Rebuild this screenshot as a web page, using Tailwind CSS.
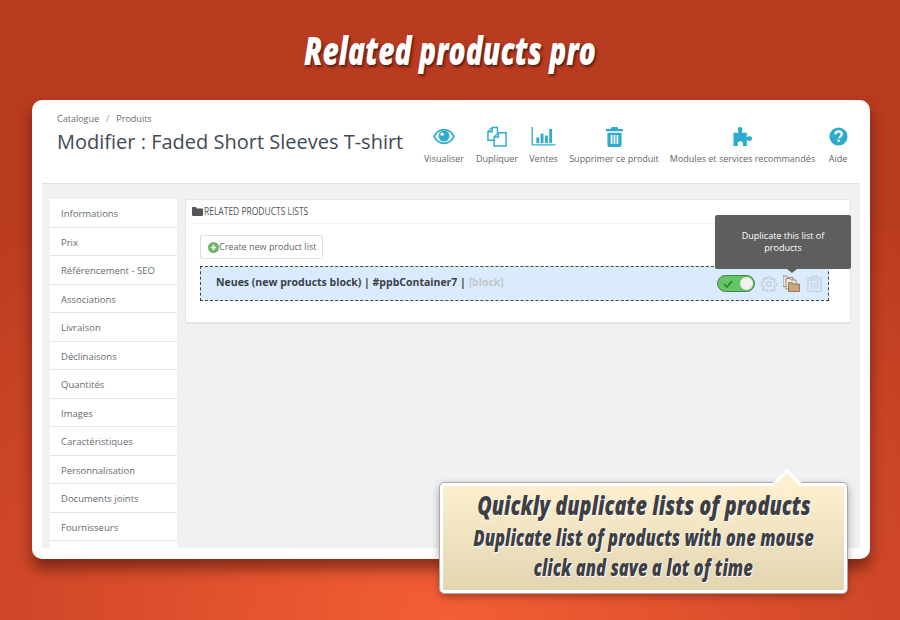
<!DOCTYPE html>
<html lang="en">
<head>
  <meta charset="UTF-8">
  <title>Related products pro</title>
  <script src="https://cdn.jsdelivr.net/npm/@tailwindcss/browser@4"></script>
</head>
<body class="w-[900px] h-[620px] overflow-hidden relative font-['Open_Sans',sans-serif] bg-[radial-gradient(ellipse_75%_85%_at_50%_100%,#f45e35_0%,#d84c2b_50%,#b93b20_100%)]">
  <h1 class="pt-[27px] h-[100px] text-center text-[38px] leading-[46px] font-extrabold italic text-white whitespace-nowrap scale-x-[.745] [text-shadow:2px_2px_3px_rgba(60,20,10,0.8)]">Related products pro</h1>

  <!-- main card -->
  <div class="mx-[32px] w-[838px] h-[459px] bg-white rounded-[10px] shadow-[0_10px_14px_rgba(60,15,5,0.55)] flex flex-col">
    <div class="h-[83px] shrink-0 flex justify-between pl-[25px] pr-[23px]">
      <div class="pt-[13px]">
        <div class="text-[9px] leading-[12px] text-[#6b6b70] flex gap-[7px]"><span>Catalogue</span><span class="text-[#999]">/</span><span>Produits</span></div>
        <div class="mt-[3px] text-[20px] leading-[28px] text-[#3f4a54] whitespace-nowrap">Modifier : Faded Short Sleeves T-shirt</div>
      </div>
      <div class="flex text-[9px] leading-[12px] text-[#666] pt-[26px] h-full">
        <div class="w-[40px] mr-[12px] flex flex-col items-center">
          <svg width="22" height="21" viewBox="0 0 24 22" fill="none"><path d="M1 11c3-5 7-7.500 11-7.500S20 6 23 11c-3 5-7 7.500-11 7.500S4 16 1 11z" stroke="#2eacce" stroke-width="1.800"/><circle cx="12" cy="10.500" r="6" fill="#2eacce"/><circle cx="10" cy="8.500" r="1.800" fill="#fff"/></svg>
          <span class="mt-[6px] whitespace-nowrap">Visualiser</span>
        </div>
        <div class="w-[42px] mr-[11px] flex flex-col items-center">
          <svg width="22" height="21" viewBox="0 0 22 22" fill="none" stroke="#2eacce" stroke-width="1.500"><path d="M8 15H1.500V6L6 1.500h5.500V7"/><path d="M6 1.500V6H1.500"/><path d="M8 11.500 12.500 7h8v14H8z" fill="#fff"/><path d="M12.500 7v4.500H8"/></svg>
          <span class="mt-[6px] whitespace-nowrap">Dupliquer</span>
        </div>
        <div class="w-[29px] mr-[11px] flex flex-col items-center">
          <svg width="25" height="21" viewBox="0 0 25 22" fill="#2eacce"><path d="M0 1h1.400v18H25v1.400H0z"/><rect x="5" y="12" width="3" height="6"/><rect x="9.500" y="8" width="3" height="10"/><rect x="14" y="10" width="3" height="8"/><rect x="18.500" y="3" width="3" height="15"/></svg>
          <span class="mt-[6px] whitespace-nowrap">Ventes</span>
        </div>
        <div class="w-[90px] mr-[11px] flex flex-col items-center">
          <svg width="17" height="21" viewBox="0 0 18 22" fill="#2eacce"><path d="M6 1h6l1 2h5v2.500H0V3h5z"/><path fill-rule="evenodd" d="M1.500 7h15v13a2 2 0 0 1-2 2h-11a2 2 0 0 1-2-2zM5 9.500V19h1.800V9.500zm3.100 0V19h1.800V9.500zm3.100 0V19H13V9.500z"/></svg>
          <span class="mt-[6px] whitespace-nowrap">Supprimer ce produit</span>
        </div>
        <div class="w-[145px] mr-[14px] flex flex-col items-center">
          <svg width="20" height="21" viewBox="0 0 20 22" fill="#2eacce"><path d="M0 7h5.500C5 5.500 4.500 5 4.500 3.500a2.500 2.500 0 0 1 5 0C9.500 5 9 5.500 8.500 7H14v4.500c1.500-.8 2-1 3-.8a2.500 2.500 0 0 1 0 5c-1 0-1.500-.2-3-.8V21H9.500c.6-1.500.7-2 .5-2.800a2.800 2.800 0 0 0-5.500 0c-.2.800 0 1.300.5 2.800H0z"/></svg>
          <span class="mt-[6px] whitespace-nowrap">Modules et services recommandés</span>
        </div>
        <div class="w-[18px] flex flex-col items-center">
          <svg width="19" height="21" viewBox="0 0 20 22" class="shrink-0"><circle cx="10" cy="11" r="9.500" fill="#2eacce"/><path d="M6.600 8.800C6.800 6.700 8.200 5.600 10.100 5.600c2 0 3.400 1.200 3.400 2.900 0 2.500-2.700 2.500-2.700 4.400" fill="none" stroke="#fff" stroke-width="2.200"/><rect x="9" y="14.300" width="2.300" height="2.300" fill="#fff"/></svg>
          <span class="mt-[6px] whitespace-nowrap">Aide</span>
        </div>
      </div>
    </div>

    <div class="mx-[10px] h-[365px] bg-[#eff1f2] border-t border-[#dfe2e4] flex gap-[8px] pt-[15px] pl-[8px] pr-[9px] overflow-hidden">
      <ul class="w-[127px] shrink-0 bg-white text-[9.500px] text-[#666b70] self-start">
        <li class="h-[28.500px] leading-[29px] pl-[11px] border-b border-[#e3e6e8]">Informations</li>
        <li class="h-[28.500px] leading-[29px] pl-[11px] border-b border-[#e3e6e8]">Prix</li>
        <li class="h-[28.500px] leading-[29px] pl-[11px] border-b border-[#e3e6e8]">Référencement - SEO</li>
        <li class="h-[28.500px] leading-[29px] pl-[11px] border-b border-[#e3e6e8]">Associations</li>
        <li class="h-[28.500px] leading-[29px] pl-[11px] border-b border-[#e3e6e8]">Livraison</li>
        <li class="h-[28.500px] leading-[29px] pl-[11px] border-b border-[#e3e6e8]">Déclinaisons</li>
        <li class="h-[28.500px] leading-[29px] pl-[11px] border-b border-[#e3e6e8]">Quantités</li>
        <li class="h-[28.500px] leading-[29px] pl-[11px] border-b border-[#e3e6e8]">Images</li>
        <li class="h-[28.500px] leading-[29px] pl-[11px] border-b border-[#e3e6e8]">Caractéristiques</li>
        <li class="h-[28.500px] leading-[29px] pl-[11px] border-b border-[#e3e6e8]">Personnalisation</li>
        <li class="h-[28.500px] leading-[29px] pl-[11px] border-b border-[#e3e6e8]">Documents joints</li>
        <li class="h-[28.500px] leading-[29px] pl-[11px] border-b border-[#e3e6e8]">Fournisseurs</li>
        <li class="h-[28.500px]"></li>
      </ul>

      <div class="flex-1 h-[125px] bg-white rounded-[3px] border border-[#e2e5e7] border-b-2 px-[6px] relative">
        <div class="h-[24px] flex items-center border-b border-[#eef0f1]">
          <svg width="11" height="9" viewBox="0 0 11 9" fill="#555" class="shrink-0"><path d="M0 1a1 1 0 0 1 1-1h3l1 1.500h5a1 1 0 0 1 1 1V8a1 1 0 0 1-1 1H1a1 1 0 0 1-1-1z"/></svg>
          <span class="ml-[1px] text-[11px] text-[#555] whitespace-nowrap origin-left scale-x-[.77]">RELATED PRODUCTS LISTS</span>
        </div>
        <div class="mt-[11px] ml-[8px] w-[123px] h-[24px] bg-white border border-[#dcdfe2] rounded-[2px] flex items-center pl-[7px] text-[9px] text-[#666] whitespace-nowrap">
          <svg width="11" height="11" viewBox="0 0 11 11" class="shrink-0"><circle cx="5.500" cy="5.500" r="5.500" fill="#6db36a"/><path d="M5.500 2.800v5.400M2.800 5.500h5.400" stroke="#fff" stroke-width="1.500"/></svg>
          <span>Create new product list</span>
        </div>
        <div class="mt-[7px] ml-[8px] w-[629px] h-[35px] bg-[#d9ebfc] border border-dashed border-[#444] flex items-center pl-[15px] pr-[5px]">
          <span class="text-[10.500px] -mt-[2px] font-bold text-[#3a4048] whitespace-nowrap">Neues (new products block) | #ppbContainer7 | <span class="text-[#c4c8cc]">[block]</span></span>
          <div class="ml-auto flex items-center gap-[6px]">
            <div class="w-[38px] h-[17px] rounded-full bg-[#63c566] border border-[#4a7f50] flex items-center justify-between pl-[5px] pr-[1px]">
              <svg width="10" height="8" viewBox="0 0 10 8" fill="none"><path d="M1 4l3 3 5-6" stroke="#2f7d35" stroke-width="1.600"/></svg>
              <div class="w-[13px] h-[13px] rounded-full bg-[#f1f1f1]"></div>
            </div>
            <svg width="16" height="16" viewBox="0 0 16 16" fill="none" stroke="#c3ced6" stroke-width="1.300"><circle cx="8" cy="8" r="2.300"/><path d="M6.800 1h2.400l.4 2 1.200.5 1.700-1.100 1.700 1.700-1.100 1.700.5 1.200 2 .4v2.400l-2 .4-.5 1.200 1.100 1.700-1.700 1.700-1.700-1.100-1.200.5-.4 2H6.800l-.4-2-1.200-.5-1.700 1.100-1.700-1.700 1.100-1.700-.5-1.200-2-.4V6.800l2-.4.500-1.200-1.100-1.700 1.700-1.700 1.700 1.100 1.200-.5z"/></svg>
            <svg width="17" height="17" viewBox="0 0 17 17"><path d="M0 1h4l1 1.500h5v9H0z" fill="#ece6dc" stroke="#7a6a55" stroke-width=".7"/><path d="M3 3.500h4l1 1.500h5v9H3z" fill="#f1ebe2" stroke="#7a6a55" stroke-width=".7"/><path d="M5.500 7.500h4l1 1.500h6v7.500h-11z" fill="#c9a47a" stroke="#7d5f3f" stroke-width=".7"/></svg>
            <svg width="17" height="17" viewBox="0 0 17 17" fill="none" stroke="#c3ced6" stroke-width="1.200"><path d="M.5 3h16M6 3V1h5v2M2 5v10.500a1 1 0 0 0 1 1h11a1 1 0 0 0 1-1V5zM5.500 7v7.500M8.500 7v7.500M11.500 7v7.500"/></svg>
          </div>
        </div>

        <!-- tooltip -->
        <div class="absolute left-[529px] top-[15px] w-[136px] h-[54px] bg-[#5e5e5e] rounded-[2px] flex items-center justify-center text-center px-[22px] text-[9px] leading-[12px] text-white">
          Duplicate this list of products
          <div class="absolute left-[72px] -bottom-[4px] w-0 h-0 border-x-[5px] border-x-transparent border-t-[4px] border-t-[#5e5e5e]"></div>
        </div>
      </div>
    </div>
  </div>

  <!-- callout -->
  <div class="absolute left-[440px] top-[483px] w-[407px] h-[110px] rounded-[4px] border-[3px] border-white outline outline-1 outline-[#aaa] bg-[linear-gradient(#fcf0d0,#e2d5b0)] shadow-[0_3px_8px_rgba(60,20,10,0.45)] flex flex-col items-center italic font-extrabold text-[#3f3f42] [text-shadow:0_0_2px_#fff,1px_1px_1px_#fff]">
    <div class="absolute left-[334px] -top-[13px] w-[20px] h-[20px] rotate-45 bg-[#fcf0d0] border-l-[3px] border-t-[3px] border-white"></div>
    <div class="relative shrink-0 text-[27px] leading-[34px] mt-[2px] whitespace-nowrap scale-x-[.735]">Quickly duplicate lists of products</div>
    <div class="relative shrink-0 text-[22px] leading-[30px] whitespace-nowrap scale-x-[.755]">Duplicate list of products with one mouse</div>
    <div class="relative shrink-0 text-[22px] leading-[30px] whitespace-nowrap scale-x-[.755]">click and save a lot of time</div>
  </div>
</body>
</html>
